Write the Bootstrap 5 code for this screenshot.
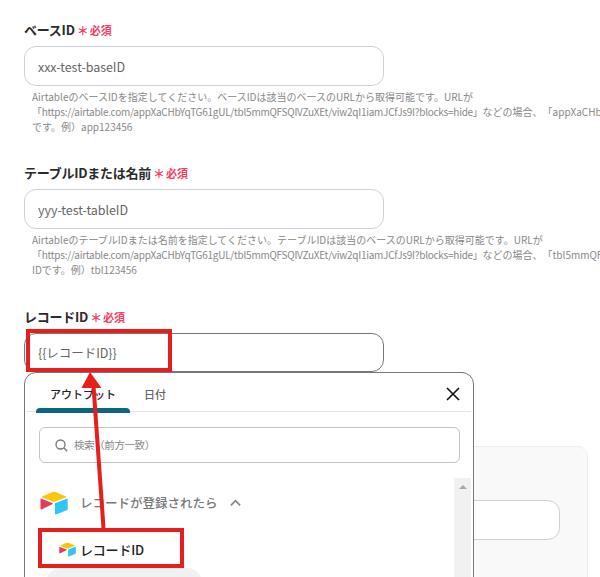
<!DOCTYPE html>
<html lang="ja">
<head>
<meta charset="utf-8">
<title>レコードID</title>
<link rel="stylesheet" href="https://cdn.jsdelivr.net/npm/bootstrap@5.3.0/dist/css/bootstrap.min.css">
<style>
html, body { height: 577px; overflow: hidden; background: #fff; }
body { font-family: "Noto Sans CJK JP", "Noto Sans", sans-serif; color: #333; text-spacing-trim: space-all; }
.pg { position: relative; width: 600px; height: 577px; overflow: hidden; padding: 21px 0 0 24px; }
.fld { margin-bottom: 30px; }
.fld.wide { margin-bottom: 31px; }
.fld-label { font-size: 13px; font-weight: 700; color: #2b2b2b; line-height: 16px; margin-bottom: 7px; display: flex; align-items: center; letter-spacing: -.25px; }
.req { font-size: 11px; color: #f5405f; font-weight: 700; margin-left: 1px; letter-spacing: 0; }
.star { font-size: 12px; color: #f5405f; font-weight: 700; margin-left: 2px; line-height: 16px; padding-top: 2px; letter-spacing: 0; }
.fld-input.form-control { width: 360px; height: 40px; border-radius: 12px; border-color: #cdd2da; font-size: 12.5px; color: #666; padding: 0 13px; box-shadow: none; letter-spacing: -.05px; }
.fld-input.act { border-color: #777; height: 39px; }
.help { margin: 3px 0 0 8px; font-size: 10px; line-height: 15px; color: #888; white-space: nowrap; }
.urlline { letter-spacing: -.26px; }
.bgcard { width: 564px; height: 200px; margin-top: 74px; padding: 53px 27px 0; background: #f9f9fa; border: 1px solid #eeeff1; border-radius: 10px 10px 0 0; }
.bgcard .form-control { height: 40px; border-radius: 12px; border-color: #cdd2da; }
.pop { position: absolute; left: 24px; top: 372px; width: 450px; height: 240px; background: #fff; border: 1px solid #777; border-radius: 12px 12px 0 0; padding: 0 2px; }
.tabbar { height: 39px; border-bottom: 1px solid #e4e4e4; padding-left: 9px; }
.tabitem { width: 94px; text-align: center; font-size: 11px; line-height: 42px; font-weight: 500; color: #222; position: relative; height: 39px; }
.tabitem.on::after { content: ""; position: absolute; left: 0; right: 0; bottom: -1px; height: 5px; background: #0b6680; border-radius: 4px 4px 0 0; }
.tabitem.off { width: 50px; color: #666; }
.xbtn { margin: 14px 11px 0 auto; width: 14px; height: 14px; display: block; }
.srch { margin: 15px 11px 0 12px; height: 36px; border: 1px solid #c4c4c4; border-radius: 6px; padding-left: 15px; gap: 6px; font-size: 10.5px; color: #888; letter-spacing: -.4px; }
.poprow { margin-top: 15px; }
.plist { padding-left: 13px; width: 427px; }
.grp { margin-top: 12px; height: 26px; gap: 12px; font-size: 12.5px; font-weight: 500; color: #777; }
.grp svg.lg { width: 28px; height: 24px; }
.chip { width: 133px; height: 31px; margin: 18px 0 0 6px; padding-left: 13px; gap: 4px; background: #fff; border-radius: 15px; box-shadow: 0 0 6px rgba(0,0,0,.06); font-size: 13px; font-weight: 500; color: #222; letter-spacing: -.2px; }
.chip svg { width: 17px; height: 15px; }
.chip2 { width: 156px; height: 40px; margin: 3px 0 0 6px; background: #f1f1f1; border-radius: 15px; }
.sbar { width: 17px; height: 110px; background: #f1f1f1; margin-left: auto; }
.sbar i { display: block; margin: 7px auto 0; width: 0; height: 0; border: 4px solid transparent; border-top: 0; border-bottom: 4px solid #a8a8a8; }
.rbox { position: absolute; border: 4px solid #e61e1e; }
.rb1 { left: 26px; top: 329px; width: 146px; height: 43px; }
.rb2 { left: 38px; top: 528px; width: 146px; height: 40px; }
.arrow { position: absolute; left: 0; top: 0; width: 600px; height: 577px; pointer-events: none; }
</style>
</head>
<body>
<svg width="0" height="0" class="d-block position-absolute">
<symbol id="atlogo" viewBox="8 8 182 152">
<path fill="#fcc70a" d="M90.04 12.37 24.08 39.66c-3.67 1.52-3.63 6.73.06 8.19l66.24 26.27c5.82 2.31 12.3 2.31 18.12 0l66.23-26.27c3.69-1.46 3.73-6.67.06-8.19l-65.96-27.29c-6.02-2.49-12.78-2.49-18.79 0"/>
<path fill="#2fc6f6" d="M105.31 88.46v65.62c0 3.12 3.15 5.26 6.05 4.11l73.81-28.65c1.68-.67 2.79-2.3 2.79-4.11V59.81c0-3.12-3.15-5.26-6.05-4.11l-73.81 28.65c-1.68.67-2.79 2.3-2.79 4.11"/>
<path fill="#e8395c" d="M88.08 91.85 66.17 102.42l-2.22 1.08-46.24 22.15c-2.93 1.41-6.67-.72-6.67-3.98V60.09c0-1.18.6-2.2 1.41-2.96.34-.34.72-.62 1.12-.84 1.1-.66 2.68-.84 4.02-.31l70.12 27.78c3.56 1.41 3.84 6.41.37 8.09"/>
</symbol>
</svg>
<div class="pg">
  <div class="fld">
    <div class="fld-label">ベースID<span class="star">＊</span><span class="req">必須</span></div>
    <input class="form-control fld-input" value="xxx-test-baseID">
    <div class="help">AirtableのベースIDを指定してください。ベースIDは該当のベースのURLから取得可能です。URLが<br><span class="urlline">「https://airtable.com/appXaCHbYqTG61gUL/tbl5mmQFSQIVZuXEt/viw2qI1iamJCfJs9I?blocks=hide」</span>などの場合、「appXaCHbYqTG61gUL」の部分がベースID<br>です。例）app123456</div>
  </div>
  <div class="fld wide">
    <div class="fld-label">テーブルIDまたは名前<span class="star">＊</span><span class="req">必須</span></div>
    <input class="form-control fld-input" value="yyy-test-tableID">
    <div class="help">AirtableのテーブルIDまたは名前を指定してください。テーブルIDは該当のベースのURLから取得可能です。URLが<br><span class="urlline">「https://airtable.com/appXaCHbYqTG61gUL/tbl5mmQFSQIVZuXEt/viw2qI1iamJCfJs9I?blocks=hide」</span>などの場合、「tbl5mmQFSQIVZuXEt」の部分がテーブル<br>IDです。例）tbl123456</div>
  </div>
  <div>
    <div class="fld-label">レコードID<span class="star">＊</span><span class="req">必須</span></div>
    <input class="form-control fld-input act" value="{{レコードID}}">
  </div>
  <div class="bgcard"><input class="form-control"></div>

  <div class="pop">
    <div class="tabbar d-flex">
      <div class="tabitem on">アウトプット</div>
      <div class="tabitem off">日付</div>
      <svg class="xbtn" viewBox="0 0 14 14"><path d="M1 1l12 12M13 1L1 13" stroke="#111" stroke-width="1.6" fill="none"/></svg>
    </div>
    <div class="srch d-flex align-items-center">
      <svg width="13" height="13" viewBox="0 0 13 13"><circle cx="5.5" cy="5.5" r="4.5" fill="none" stroke="#777" stroke-width="1.3"/><path d="M9 9l3.2 3.2" stroke="#777" stroke-width="1.4"/></svg>
      <span>検索（前方一致）</span>
    </div>
    <div class="poprow d-flex">
      <div class="plist">
        <div class="grp d-flex align-items-center">
          <svg class="lg"><use href="#atlogo"/></svg>
          <span>レコードが登録されたら</span>
          <svg width="11" height="8" viewBox="0 0 12 8"><path d="M1 6.5l5-5 5 5" fill="none" stroke="#888" stroke-width="2"/></svg>
        </div>
        <div class="chip d-flex align-items-center">
          <svg><use href="#atlogo"/></svg>
          <span>レコードID</span>
        </div>
        <div class="chip2"></div>
      </div>
      <div class="sbar"><i></i></div>
    </div>
  </div>

  <div class="rbox rb1"></div>
  <div class="rbox rb2"></div>
  <svg class="arrow" viewBox="0 0 600 577">
    <path d="M93.5 386 L103.5 528" stroke="#e61e1e" stroke-width="4" fill="none"/>
    <path d="M90 372 L101.5 388 L81.5 388 Z" fill="#e61e1e"/>
  </svg>
</div>
<script src="https://cdn.jsdelivr.net/npm/bootstrap@5.3.0/dist/js/bootstrap.bundle.min.js"></script>
</body>
</html>
